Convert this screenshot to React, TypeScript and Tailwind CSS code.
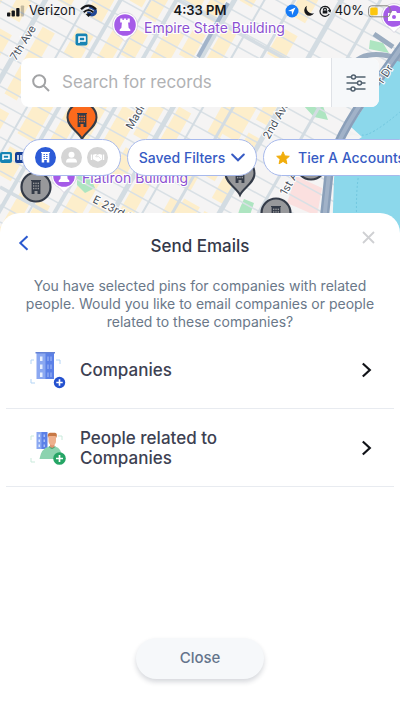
import { ReactNode, useState } from 'react';

// x position of each avenue where it crosses the top edge of the map
const AVENUES = [
  { x: -30, width: 3 },
  { x: 45, width: 5 },
  { x: 88, width: 2 },
  { x: 120, width: 4 },
  { x: 150, width: 2 },
  { x: 176, width: 4 },
  { x: 234, width: 5 },
  { x: 264, width: 2 },
  { x: 294, width: 3 },
  { x: 341, width: 5 },
  { x: 380, width: 3 },
];
const STREETS = Array.from({ length: 27 }, (_, i) => -220 + i * 17);
const SHOP_STRIPS = [-8, 24, 66, 104, 138, 160, 194, 218, 248, 308];

function BuildingGlyph({ x, y, color = '#343b48', hole = '#8e9094' }: { x: number; y: number; color?: string; hole?: string }) {
  return (
    <g transform={`translate(${x} ${y})`}>
      <path d="M-5 -7h10v1h-.6V7H1.5V4h-3v3h-2.9V-6H-5z" fill={color} />
      {[-4.4, -1.8, 0.8].map((cy) => (
        <g key={cy} fill={hole}>
          <rect x={-3} y={cy} width={1.4} height={1.5} />
          <rect x={-0.7} y={cy} width={1.4} height={1.5} />
          <rect x={1.6} y={cy} width={1.4} height={1.5} />
        </g>
      ))}
    </g>
  );
}

function TearPin({ x, y, fill }: { x: number; y: number; fill: string }) {
  return (
    <g>
      <path
        transform={`translate(${x} ${y})`}
        d="M0 21C-3 14 -14.500 9 -14.500 -.5A14.500 14.500 0 0 1 14.500 -.5C14.500 9 3 14 0 21Z"
        fill={fill}
        stroke="#343b48"
        strokeWidth="2"
      />
      <BuildingGlyph x={x} y={y + 2} hole={fill} />
    </g>
  );
}

function RoundPin({ x, y }: { x: number; y: number }) {
  return (
    <g>
      <circle cx={x} cy={y} r="14.500" fill="#97989b" stroke="#343b48" strokeWidth="2.200" />
      <BuildingGlyph x={x} y={y} hole="#97989b" />
    </g>
  );
}

function Landmark({ x, y, children }: { x: number; y: number; children: ReactNode }) {
  return (
    <g transform={`translate(${x} ${y})`}>
      <path d="M0 16.500L-5 11.500A12.500 12.500 0 1 1 5 11.500Z" fill="#fff" stroke="#cfc8d8" strokeWidth=".7" />
      <circle r="10.800" fill="#a55be8" />
      {children}
    </g>
  );
}

const ROOK = 'M-4.800 -6.500h2.300v1.500h1.300v-1.500h2.400v1.500h1.300v-1.500h2.300v4H3.100L3.600 2.800L5.300 4.500V6H-5.300V4.500L-3.600 2.800L-3.100 -2.500H-4.800z';

function CityMap() {
  return (
    <svg
      className="absolute inset-x-0 top-0 h-[240px] w-full"
      viewBox="0 0 400 240"
      preserveAspectRatio="xMidYMid slice"
      fontFamily='Inter, "Liberation Sans", sans-serif'
      aria-hidden="true"
    >
      <rect width="400" height="240" fill="#f5f4f4" />
      {SHOP_STRIPS.map((x, i) => (
        <line
          key={x}
          x1={x + 20}
          y1={-35}
          x2={x - 140}
          y2={245}
          stroke="#fdeecb"
          strokeWidth={i % 3 === 0 ? 18 : 14}
          strokeDasharray={i % 2 ? '62 15 30 30' : '45 30 77 15'}
        />
      ))}
      <line x1="155" y1="240" x2="250" y2="70" stroke="#fdeecb" strokeWidth="14" strokeDasharray="45 15" />
      <line x1="195" y1="240" x2="275" y2="98" stroke="#fdeecb" strokeWidth="12" strokeDasharray="30 15" />
      <path d="M303 105l20 1 5 14-14-3z M77 176l12-2 6 14-10 5-8-8z M240 208l4-9 10 4-4 12-12-1z M370 40l13 3 6 10-20-4z" fill="#aee5c1" />
      <path d="M296 176l26 12-5 28-30-13z" fill="#fbe0df" />

      {STREETS.map((y) => (
        <line key={y} x1="0" y1={y} x2="400" y2={y + 220} stroke="#d9e0e5" strokeWidth="1.500" />
      ))}
      <path d="M0 187L104 244M160 -10L400 122" stroke="#d5dde3" strokeWidth="3.500" />
      {AVENUES.map(({ x, width }) => (
        <line key={x} x1={x + 12} y1={-20} x2={x - 140} y2={245} stroke="#d3dce2" strokeWidth={width} />
      ))}
      <path d="M228 3L198 57" stroke="#a2b4ca" strokeWidth="4" />

      <path d="M400 57L380 82L351 127L362 137L338 153L334 178L332 240H400z" fill="#8cd8eb" />
      <path d="M362 135Q370 137 400 112M358 240Q352 170 369 145" fill="none" stroke="#71c7df" strokeWidth="1" strokeDasharray="2 2" />
      <path d="M346 129L360 136L352 135L345 139z" fill="#f1f1f1" />
      <path d="M346 75Q359 42 408 62M374 34L393 47" fill="none" stroke="#9bacc0" strokeWidth="5" />
      <path d="M408 38L381 76Q342 126 330 164L322 240" fill="none" stroke="#8a9fb9" strokeWidth="9" />
      <path d="M408 38L381 76Q342 126 330 164L322 240" fill="none" stroke="#a1b2c8" strokeWidth="4" />

      <g fill="#48505b" stroke="#fff" strokeWidth="2" paintOrder="stroke" fontSize="11">
        <text transform="translate(16 61) rotate(-58)">7th Ave</text>
        <text transform="translate(132 130) rotate(-60)">Madison</text>
        <text transform="translate(269 140) rotate(-60)">2nd Ave</text>
        <text transform="translate(286 196) rotate(-60)">1st Ave</text>
        <text transform="translate(92 202) rotate(27)">E 23rd St</text>
        <text transform="translate(383 84) rotate(-57)">r Dr</text>
      </g>
      <g fill="#8c50d2" stroke="#fff" strokeWidth="2" paintOrder="stroke" fontSize="14">
        <text x="144" y="33">Empire State Building</text>
        <text x="82" y="183">Flatiron Building</text>
      </g>

      <rect x="75.500" y="33.500" width="12" height="12" rx="2" fill="#1684b3" />
      <path d="M79 43v-6h6v4h-6" fill="none" stroke="#fff" strokeWidth="1.600" />
      <rect x="0" y="152" width="12" height="11" rx="2" fill="#1684b3" />
      <path d="M3 160v-5h6v3.500h-6" fill="none" stroke="#fff" strokeWidth="1.600" />
      <rect x="15" y="152" width="13" height="11" rx="2" fill="#173f94" />
      <path d="M18 155v5M21 155v5" stroke="#fff" strokeWidth="1.500" />

      <Landmark x={125} y={25}>
        <path d={ROOK} fill="#fff" />
      </Landmark>
      <Landmark x={64} y={176}>
        <path d={ROOK} fill="#fff" />
      </Landmark>
      <Landmark x={394} y={16}>
        <path d="M-6 -3h3l1-2h4l1 2h3v8H-6z" fill="#fff" />
        <circle cy="1" r="2" fill="#a55be8" />
      </Landmark>
      <TearPin x={82} y={118} fill="#fb6a1c" />
      <TearPin x={240} y={174} fill="#97989b" />
      <RoundPin x={36} y={187} />
      <RoundPin x={311} y={165} />
      <RoundPin x={276} y={213} />
    </svg>
  );
}

function StatusBar() {
  return (
    <div className="flex h-[22px] items-center px-[7px] text-[13px] text-[#15171b]">
      <div className="flex flex-1 items-center gap-1">
        <svg width="18" height="12" viewBox="0 0 18 12" fill="currentColor">
          <rect x="0" y="7.500" width="3.300" height="4" rx=".8" />
          <rect x="4.600" y="5.500" width="3.300" height="6" rx=".8" />
          <rect x="9.200" y="3" width="3.300" height="8.500" rx=".8" />
          <rect x="13.800" y=".5" width="3.300" height="11" rx=".8" opacity=".25" />
        </svg>
        <span>Verizon</span>
        <svg width="18" height="14" viewBox="0 0 18 14" fill="none">
          <circle cx="12" cy="7.500" r="5" fill="#1f4795" />
          <path d="M1 5.200Q8.500 -2 16 5.200" stroke="#15171b" strokeWidth="2.200" />
          <path d="M3.700 8.200Q8.500 3.700 13.300 8.200" stroke="#fff" strokeWidth="3" />
          <path d="M3.700 8.200Q8.500 3.700 13.300 8.200" stroke="#15171b" strokeWidth="2" />
          <path d="M5.800 10.300Q8.500 8.200 11.200 10.300L8.500 13z" fill="#15171b" />
        </svg>
      </div>
      <span className="font-semibold">4:33 PM</span>
      <div className="flex flex-1 items-center justify-end gap-1">
        <svg width="14" height="14" viewBox="0 0 14 14">
          <circle cx="7" cy="7" r="6.500" fill="#167bf6" />
          <path d="M10.500 3.500L3 7L6.700 7.300L7.100 11z" fill="#fff" />
        </svg>
        <svg width="12" height="12" viewBox="0 0 12 12">
          <path d="M4 .8A5.300 5.300 0 1 0 11.200 8A5.500 5.500 0 0 1 4 .8z" fill="currentColor" />
        </svg>
        <svg width="12" height="12" viewBox="0 0 12 12" fill="none" stroke="currentColor" strokeWidth="1.200">
          <path d="M10.300 9A5 5 0 1 1 11 5.500M9.300 5.200L11 6.600L12 4.700" />
          <path d="M4.600 5.500V4.500a1.400 1.400 0 0 1 2.800 0v1" />
          <rect x="3.700" y="5.500" width="4.600" height="3" fill="currentColor" stroke="none" />
        </svg>
        <span>40%</span>
        <svg width="25" height="13" viewBox="0 0 25 13">
          <rect x=".6" y=".8" width="21.500" height="11" rx="3" fill="none" stroke="#85857f" strokeWidth="1" />
          <rect x="2.200" y="2.400" width="7.500" height="7.800" rx="1.500" fill="#fcc60c" />
          <path d="M23.300 4.500q1.600 1.800 0 3.600z" fill="#85857f" />
        </svg>
      </div>
    </div>
  );
}

function SearchBar() {
  const [query, setQuery] = useState('');
  return (
    <div className="mx-[21px] mt-9 flex h-[49px] overflow-hidden rounded-lg bg-white">
      <label className="flex flex-1 items-center gap-3 pl-[11px]">
        <svg className="shrink-0" width="18" height="18" viewBox="0 0 18 18" fill="none" stroke="#a2a3a5" strokeWidth="2">
          <circle cx="7.200" cy="7.200" r="6" />
          <path d="M11.600 11.600L17 17" />
        </svg>
        <input
          aria-label="Search for records"
          className="w-full min-w-0 bg-transparent text-[17px] text-[#343b48] outline-none placeholder:text-[#b1b2b4]"
          placeholder="Search for records"
          value={query}
          onChange={(e) => setQuery(e.target.value)}
        />
      </label>
      <button type="button" aria-label="Filter options" className="flex w-12 items-center justify-center border-l border-[#dfe2e7] bg-[#f6f8fa]">
        <svg width="20" height="20" viewBox="0 0 20 20" fill="#f6f8fa" stroke="#52616f" strokeWidth="1.500">
          <path d="M.5 4h19M.5 10h19M.5 16h19" />
          <circle cx="7.500" cy="4" r="2" />
          <circle cx="13.500" cy="10" r="2" />
          <circle cx="7" cy="16" r="2" />
        </svg>
      </button>
    </div>
  );
}

const chipClass = 'flex h-[37px] shrink-0 items-center rounded-full border border-[#a7b9ec] bg-white text-[14px] font-medium text-[#375bc4]';

function FilterChips() {
  return (
    <div className="mt-8 flex gap-[6px] overflow-hidden pl-[22px]">
      <div className={`${chipClass} w-[99px] justify-center gap-[5px]`}>
        <button type="button" aria-label="Companies">
          <svg width="21" height="21" viewBox="0 0 21 21">
            <circle cx="10.500" cy="10.500" r="10.500" fill="#2c5bd7" />
            <path d="M6 5h9v1h-.7v9.500H11.800v-2.500H9.200v2.500H6.700V6H6z" fill="#fff" />
            <path d="M8.500 7.500h4M8.500 9.500h4M8.500 11.500h4" stroke="#2c5bd7" strokeWidth=".9" strokeDasharray="1.500 1" />
          </svg>
        </button>
        <button type="button" aria-label="People">
          <svg width="21" height="21" viewBox="0 0 21 21">
            <circle cx="10.500" cy="10.500" r="10.500" fill="#d5d5d5" />
            <circle cx="10.500" cy="7.700" r="3" fill="#fff" />
            <path d="M5 15.500Q5 11.500 8.500 11.500h4Q16 11.500 16 15.500z" fill="#fff" />
          </svg>
        </button>
        <button type="button" aria-label="Deals">
          <svg width="21" height="21" viewBox="0 0 21 21">
            <circle cx="10.500" cy="10.500" r="10.500" fill="#d5d5d5" />
            <path d="M3.800 7.500h1.400v5.500H3.800zM15.800 7.500h1.400v5.500h-1.400zM6 7.800l2.500-.8 2 .7 2-.7 2.500.8v4.800l-3.500 1.900-1 .1-4.500-2.300z" fill="#fff" />
            <path d="M10.500 7.700L8.700 9.500q1.300 1 2.500-.2l2.600 2.500" fill="none" stroke="#d5d5d5" strokeWidth=".7" />
          </svg>
        </button>
      </div>
      <button type="button" className={`${chipClass} w-[130px] justify-center gap-[6px]`}>
        Saved Filters
        <svg width="14" height="9" viewBox="0 0 14 9" fill="none" stroke="currentColor" strokeWidth="2" strokeLinecap="round">
          <path d="M1.200 1.500L7 7.300L12.800 1.500" />
        </svg>
      </button>
      <button type="button" className={`${chipClass} gap-2 px-3`}>
        <svg width="14" height="14" viewBox="0 0 14 14" fill="#f1ad0b" stroke="#f1ad0b" strokeLinejoin="round">
          <path d="M7 .8L8.800 4.900L13.300 5.300L9.900 8.300L10.900 12.800L7 10.400L3.100 12.800L4.100 8.300L.7 5.300L5.200 4.900z" />
        </svg>
        Tier A Accounts
      </button>
    </div>
  );
}

function CompaniesArt() {
  return (
    <svg width="38" height="40" viewBox="0 0 38 40">
      <path d="M1 14v-4h3M26 10h4v4M1 29v4h4" fill="none" stroke="#b3d4f5" strokeWidth="1" />
      <rect x="6.500" y="3" width="10" height="26" fill="#8ba8f1" />
      <rect x="15.500" y="3" width="8.500" height="26" fill="#5b80e7" />
      <rect x="5.500" y="2" width="19.500" height="1.500" fill="#6482d6" />
      {[6.500, 14.500, 22.500].map((y) => (
        <g key={y} fill="#e8effe">
          <rect x="10" y={y} width="2.500" height="4.500" />
          <rect x="17.500" y={y} width="1" height="4.500" fill="#a8bdf7" />
          <rect x="20.500" y={y} width="1" height="4.500" fill="#a8bdf7" />
        </g>
      ))}
      <circle cx="29.500" cy="32.500" r="5.700" fill="#2451cf" />
      <path d="M29.500 29.300v6.400M26.300 32.500h6.400" stroke="#fff" strokeWidth="1.600" />
    </svg>
  );
}

function PeopleArt() {
  return (
    <svg width="38" height="40" viewBox="0 0 38 40">
      <path d="M1 12V8h3M28 8h4v4M1 30v4h4" fill="none" stroke="#c9eadb" strokeWidth="1" />
      <rect x="6.500" y="4" width="6" height="17" fill="#8ba8f1" />
      <rect x="11.500" y="4" width="6" height="17" fill="#5b80e7" />
      {[6.500, 11.500, 16.500].map((y) => (
        <g key={y} fill="#dce7ff">
          <rect x="8.500" y={y} width="1.500" height="2.500" />
          <rect x="13.500" y={y} width="1.500" height="2.500" opacity=".6" />
        </g>
      ))}
      <path d="M9.500 31Q11 20.500 19 18.500H25Q32 20 32.500 31Z" fill="#8cd3af" />
      <path d="M20 14h4.500v5q-2.300 2.500-4.500 0z" fill="#dc9672" />
      <path d="M18.500 8h7.500v5q0 3.800-3.700 4.500Q18.500 16.500 18.500 13z" fill="#eeb08d" />
      <path d="M18 10Q17 5 20 4.800h5Q28 5.500 26.300 10l-.7-2h-6.800z" fill="#c77845" />
      <path d="M19 18.500q3.300 3.800 6 0" fill="none" stroke="#3d9c69" strokeWidth="1" />
      <circle cx="29.500" cy="30.500" r="6.300" fill="#25a565" />
      <path d="M29.500 27v7M26 30.500h7" stroke="#fff" strokeWidth="1.700" />
    </svg>
  );
}

function OptionRow({ label, art }: { label: string; art: ReactNode }) {
  return (
    <li className="border-b border-[#e8ebf0]">
      <button type="button" className="flex h-[77px] w-full items-center pl-6 pr-[22px] text-left">
        {art}
        <span className="ml-3 w-40 text-[17px] font-medium leading-5 text-[#3d4152]">{label}</span>
        <svg className="ml-auto" width="11" height="16" viewBox="0 0 11 16" fill="none" stroke="#111318" strokeWidth="2.200">
          <path d="M1.800 1.500L8.800 8L1.800 14.500" />
        </svg>
      </button>
    </li>
  );
}

function SendEmailsSheet() {
  return (
    <section className="mt-[37px] flex flex-1 flex-col rounded-t-[20px] bg-white pb-8">
      <header className="flex h-[59px] items-start justify-between px-[18px] pt-4">
        <button type="button" aria-label="Back" className="flex h-7 w-7 items-center">
          <svg width="12" height="16" viewBox="0 0 12 16" fill="none" stroke="#2b59cf" strokeWidth="2">
            <path d="M9.500 1.200L2.300 8L9.500 14.800" />
          </svg>
        </button>
        <h1 className="pt-[3px] text-[17px] font-medium leading-7 text-[#343849]">Send Emails</h1>
        <button type="button" aria-label="Dismiss" className="flex h-4 w-7 items-center justify-center">
          <svg width="13" height="13" viewBox="0 0 13 13" fill="none" stroke="#cfd0d3" strokeWidth="1.800">
            <path d="M1 1l11 11M12 1L1 12" />
          </svg>
        </button>
      </header>
      <p className="mx-auto max-w-[364px] pt-[5px] text-center text-[14px] leading-[18px] text-[#6a7889]">
        You have selected pins for companies with related people. Would you like to email companies or people related to these companies?
      </p>
      <ul className="mx-[6px]">
        <OptionRow label="Companies" art={<CompaniesArt />} />
        <OptionRow label="People related to Companies" art={<PeopleArt />} />
      </ul>
      <button
        type="button"
        className="mx-auto mt-auto h-[41px] w-32 rounded-full bg-[#f6f8fa] text-[15px] font-medium text-[#64748b] shadow-[0_3px_5px_rgba(30,40,60,0.18)]"
      >
        Close
      </button>
    </section>
  );
}

export default function App() {
  return (
    <main className="relative min-h-screen overflow-hidden bg-white font-[Inter,'Liberation_Sans',sans-serif]">
      <CityMap />
      <div className="relative flex min-h-screen flex-col">
        <StatusBar />
        <SearchBar />
        <FilterChips />
        <SendEmailsSheet />
      </div>
    </main>
  );
}
